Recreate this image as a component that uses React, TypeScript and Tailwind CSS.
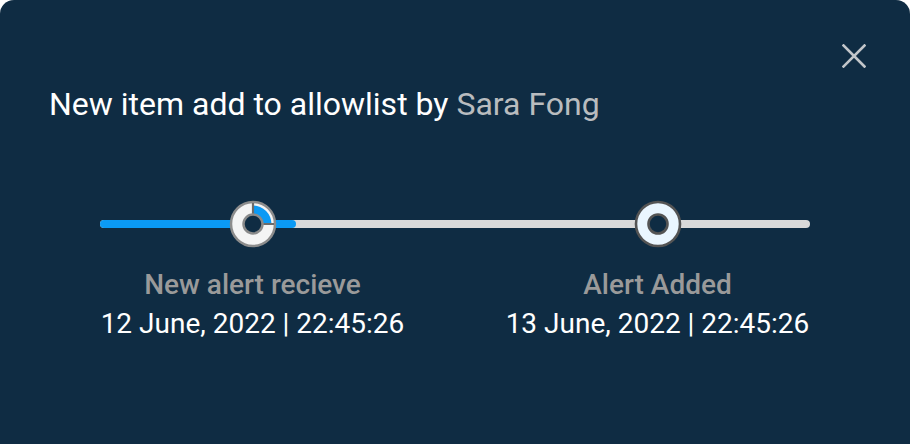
const NAVY = "#0f2c43";

function ProgressNode() {
  return (
    <svg width="48" height="48" viewBox="0 0 48 48">
      <circle cx="24" cy="24" r="22" fill="#f4f4f4" stroke="#8c8c8c" strokeWidth="2.5" />
      {/* quarter progress */}
      <path d="M24 5.5 A18.5 18.5 0 0 1 42.5 24 L34 24 A10 10 0 0 0 24 14 Z" fill="#0b9af5" />
      <path d="M24 3 L24 14 M34 24 L45 24" stroke="#6b6b6b" strokeWidth="2.2" />
      <circle cx="24" cy="24" r="9.5" fill={NAVY} stroke="#8a8a8a" strokeWidth="2.5" />
    </svg>
  );
}

function DoneNode() {
  return (
    <svg width="48" height="48" viewBox="0 0 48 48">
      <circle cx="24" cy="24" r="22" fill="#eaf6ff" stroke="#545454" strokeWidth="2.6" />
      <circle cx="24" cy="24" r="9.5" fill={NAVY} stroke="#545454" strokeWidth="2.6" />
    </svg>
  );
}

const steps = [
  { label: "New alert recieve", date: "12 June, 2022 | 22:45:26", node: <ProgressNode /> },
  { label: "Alert Added", date: "13 June, 2022 | 22:45:26", node: <DoneNode /> },
];

export default function App() {
  return (
    <div className="w-[910px] h-[444px] bg-white" style={{ fontFamily: "Roboto, 'Liberation Sans', sans-serif" }}>
      <div className="relative h-full rounded-t-[14px] bg-[#0f2c43] pl-[50px] pt-[84px]">
        <button className="absolute right-[44px] top-[44px]">
          <svg width="24" height="24" viewBox="0 0 24 24">
            <path d="M1.5 1.5 L22.5 22.5 M22.5 1.5 L1.5 22.5" stroke="#c2c6ca" strokeWidth="2.6" strokeLinecap="square" />
          </svg>
        </button>

        <h1 className="text-[32px] leading-[40px] text-white -ml-[1px]">
          New item add to allowlist by <span className="text-[#b9bcbf]">Sara Fong</span>
        </h1>

        {/* timeline */}
        <div className="relative mt-[76px] w-[810px]">
          <div className="absolute left-[50px] right-[50px] top-[20px] h-[8px] rounded-full bg-[#d9d9d9]">
            <div className="h-full w-[196px] rounded-full bg-[#0b9af5]" />
          </div>
          <div className="relative grid grid-cols-2">
            {steps.map((s) => (
              <div key={s.label} className="flex flex-col items-center">
                {s.node}
              </div>
            ))}
          </div>
          <div className="grid grid-cols-2 mt-[21px]">
            {steps.map((s) => (
              <div key={s.label} className="flex flex-col items-center">
                <span className="text-[28px] leading-[32px] font-medium text-[#9a9a9a]">{s.label}</span>
                <span className="text-[28px] leading-[32px] mt-[7px] text-white">{s.date}</span>
              </div>
            ))}
          </div>
        </div>
      </div>
    </div>
  );
}
